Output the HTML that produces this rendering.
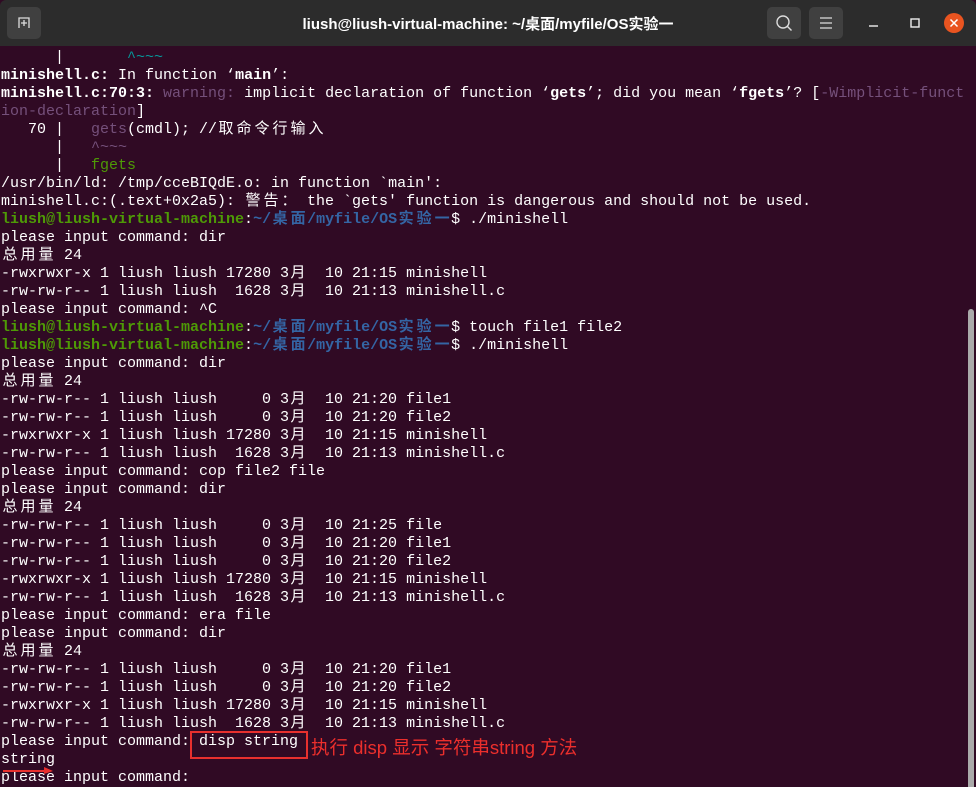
<!DOCTYPE html>
<html><head><meta charset="utf-8"><style>
body{margin:0;width:976px;height:787px;overflow:hidden;background:#300a24;font-family:"Liberation Sans","Noto Sans CJK SC",sans-serif;position:relative}
.tb{position:absolute;left:0;top:0;width:976px;height:46px;background:#2c2c2c;border-radius:6px 6px 0 0}
.title{position:absolute;left:0;right:0;top:13px;text-align:center;color:#fff;font-weight:bold;font-size:15px}
.btn{position:absolute;top:7px;width:34px;height:32px;background:#404040;border-radius:5px}
.term{position:absolute;left:1px;top:49px;font-family:"Liberation Mono","Noto Sans CJK SC",monospace;font-size:15px;line-height:18px;color:#fff;white-space:pre}
.c{display:inline-block;width:18px;text-align:center}
b{font-weight:bold}
.g{color:#4e9a06;font-weight:bold}.bl{color:#3465a4;font-weight:bold}
.p{color:#75507b}.t{color:#06989a}.gr{color:#4e9a06}
.sb{position:absolute;left:968px;top:309px;width:6px;height:478px;background:#aaa;border-radius:3px 3px 0 0}
</style></head><body>
<div class="tb">
<div class="btn" style="left:7px"><svg width="34" height="32"><path d="M12 21V11h10v10M17 13v6M14 16h6" stroke="#ddd" stroke-width="1.3" fill="none"/></svg></div>
<div class="title">liush@liush-virtual-machine: ~/桌面/myfile/OS实验一</div>
<div class="btn" style="left:767px"><svg width="34" height="32"><circle cx="16" cy="15" r="6" stroke="#ddd" stroke-width="1.4" fill="none"/><path d="M20.5 19.5l4 4" stroke="#ddd" stroke-width="1.4"/></svg></div>
<div class="btn" style="left:809px"><svg width="34" height="32"><path d="M11 11h12M11 16h12M11 21h12" stroke="#ddd" stroke-width="1.3"/></svg></div>
<svg style="position:absolute;left:860px;top:8px" width="110" height="30"><path d="M9 18h9" stroke="#eee" stroke-width="1.4"/><rect x="51" y="11" width="8" height="8" stroke="#eee" stroke-width="1.4" fill="none"/><circle cx="94" cy="15" r="10" fill="#e95420"/><path d="M90.5 11.5l7 7M97.5 11.5l-7 7" stroke="#fff" stroke-width="1.5"/></svg>
</div>
<div class="term">      |       <span class="t">^~~~</span>
<b>minishell.c:</b> In function ‘<b>main</b>’:
<b>minishell.c:70:3:</b> <span class="p">warning: </span>implicit declaration of function ‘<b>gets</b>’; did you mean ‘<b>fgets</b>’? [<span class="p">-Wimplicit-funct</span>
<span class="p">ion-declaration</span>]
   70 |   <span class="p">gets</span>(cmdl); //<span class="c">取</span><span class="c">命</span><span class="c">令</span><span class="c">行</span><span class="c">输</span><span class="c">入</span>
      |   <span class="p">^~~~</span>
      |   <span class="gr">fgets</span>
/usr/bin/ld: /tmp/cceBIQdE.o: in function `main':
minishell.c:(.text+0x2a5): <span class="c">警</span><span class="c">告</span><span class="c">：</span> the `gets' function is dangerous and should not be used.
<span class="g">liush@liush-virtual-machine</span>:<span class="bl">~/<span class="c">桌</span><span class="c">面</span>/myfile/OS<span class="c">实</span><span class="c">验</span><span class="c">一</span></span>$ ./minishell
please input command: dir
<span class="c">总</span><span class="c">用</span><span class="c">量</span> 24
-rwxrwxr-x 1 liush liush 17280 3<span class="c">月</span>  10 21:15 minishell
-rw-rw-r-- 1 liush liush  1628 3<span class="c">月</span>  10 21:13 minishell.c
please input command: ^C
<span class="g">liush@liush-virtual-machine</span>:<span class="bl">~/<span class="c">桌</span><span class="c">面</span>/myfile/OS<span class="c">实</span><span class="c">验</span><span class="c">一</span></span>$ touch file1 file2
<span class="g">liush@liush-virtual-machine</span>:<span class="bl">~/<span class="c">桌</span><span class="c">面</span>/myfile/OS<span class="c">实</span><span class="c">验</span><span class="c">一</span></span>$ ./minishell
please input command: dir
<span class="c">总</span><span class="c">用</span><span class="c">量</span> 24
-rw-rw-r-- 1 liush liush     0 3<span class="c">月</span>  10 21:20 file1
-rw-rw-r-- 1 liush liush     0 3<span class="c">月</span>  10 21:20 file2
-rwxrwxr-x 1 liush liush 17280 3<span class="c">月</span>  10 21:15 minishell
-rw-rw-r-- 1 liush liush  1628 3<span class="c">月</span>  10 21:13 minishell.c
please input command: cop file2 file
please input command: dir
<span class="c">总</span><span class="c">用</span><span class="c">量</span> 24
-rw-rw-r-- 1 liush liush     0 3<span class="c">月</span>  10 21:25 file
-rw-rw-r-- 1 liush liush     0 3<span class="c">月</span>  10 21:20 file1
-rw-rw-r-- 1 liush liush     0 3<span class="c">月</span>  10 21:20 file2
-rwxrwxr-x 1 liush liush 17280 3<span class="c">月</span>  10 21:15 minishell
-rw-rw-r-- 1 liush liush  1628 3<span class="c">月</span>  10 21:13 minishell.c
please input command: era file
please input command: dir
<span class="c">总</span><span class="c">用</span><span class="c">量</span> 24
-rw-rw-r-- 1 liush liush     0 3<span class="c">月</span>  10 21:20 file1
-rw-rw-r-- 1 liush liush     0 3<span class="c">月</span>  10 21:20 file2
-rwxrwxr-x 1 liush liush 17280 3<span class="c">月</span>  10 21:15 minishell
-rw-rw-r-- 1 liush liush  1628 3<span class="c">月</span>  10 21:13 minishell.c
please input command: disp string
string
please input command: </div>
<div style="position:absolute;left:190px;top:731px;width:114px;height:24px;border:2px solid #e8302e"></div>
<div style="position:absolute;left:311px;top:734px;color:#ec2f2c;font-size:18.5px;font-family:'Liberation Sans','Noto Sans CJK SC',sans-serif;white-space:nowrap">执行 disp 显示 字符串string 方法</div>
<svg style="position:absolute;left:2px;top:764px" width="56" height="12"><path d="M1 7h44" stroke="#e8302e" stroke-width="2"/><path d="M42 3l9 4-9 3z" fill="#e8302e"/></svg>
<div class="sb"></div>
</body></html>
